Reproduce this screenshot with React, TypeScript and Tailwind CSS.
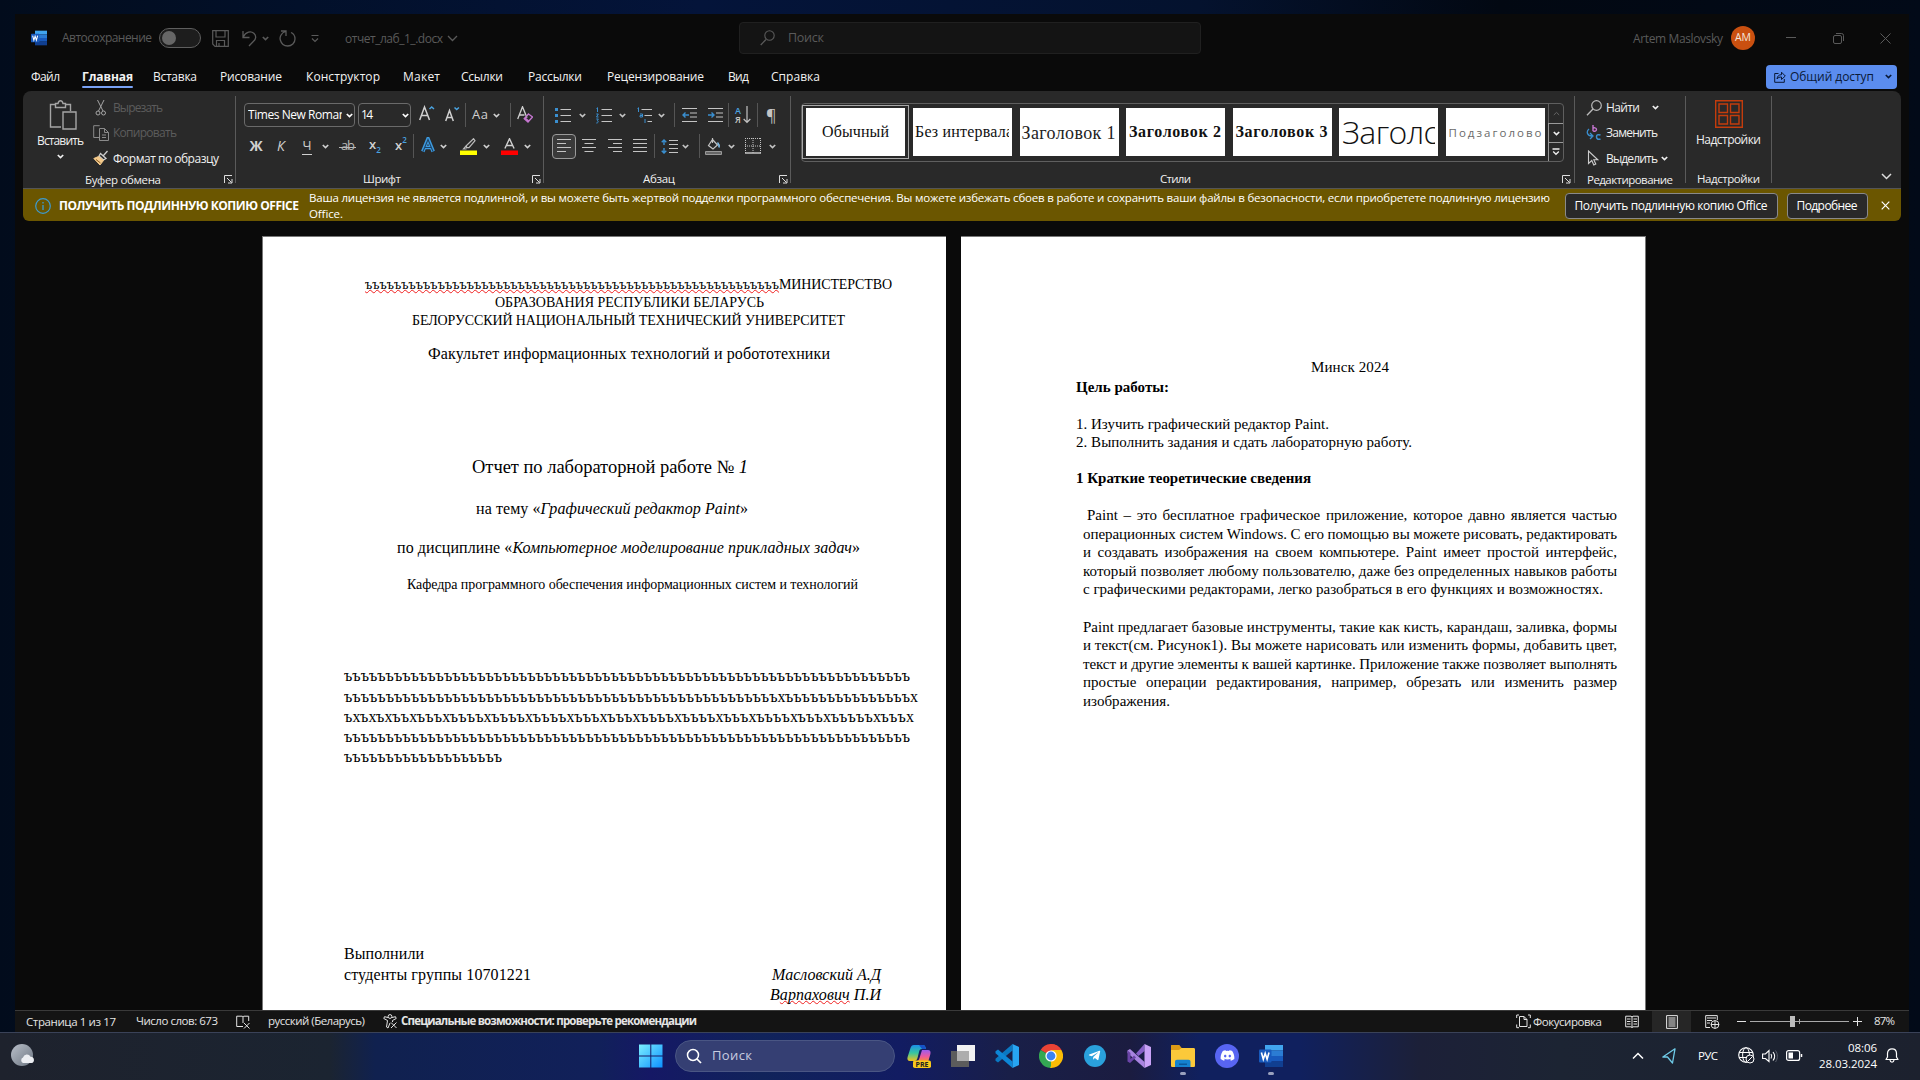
import React, { useLayoutEffect, useRef, useState } from 'react';
import { FaDiscord, FaTelegramPlane } from 'react-icons/fa';

/* One line of text whose tracking is adjusted so that it spans `w` pixels. */
function Fit({ w, className = '', children }: { w: number; className?: string; children: React.ReactNode }) {
  const ref = useRef<HTMLSpanElement>(null);
  const [spacing, setSpacing] = useState(0);
  useLayoutEffect(() => {
    const el = ref.current;
    if (!el) return;
    const n = (el.textContent || '').length;
    if (n > 1) setSpacing((w - el.getBoundingClientRect().width) / (n - 1));
  }, [w]);
  return (
    <span className={`block shrink-0 whitespace-nowrap ${className}`} style={{ width: w }}>
      <span ref={ref} className="inline-block" style={{ letterSpacing: spacing }}>{children}</span>
    </span>
  );
}

function Svg({ w, h, className = '', children }: { w: number; h: number; className?: string; children: React.ReactNode }) {
  return (
    <svg width={w} height={h} viewBox={`0 0 ${w} ${h}`} fill="none" stroke="currentColor" className={`shrink-0 ${className}`}>
      {children}
    </svg>
  );
}

const Chev = ({ className = '' }: { className?: string }) => (
  <Svg w={7} h={5} className={className}><path d="M.8 1l2.700 2.500L6.200 1" strokeWidth="1.700" /></Svg>
);
const Sep = ({ className = '' }: { className?: string }) => <div className={`h-[24px] w-px shrink-0 bg-[#555] ${className}`} />;
const Divider = () => <div className="my-[5px] w-px shrink-0 bg-[#5a5a5a]" />;
const Launcher = ({ className = '' }: { className?: string }) => (
  <Svg w={9} h={9} className={`text-[#ddd] ${className}`}><path d="M.5 8V.5H8M3 3l4.500 4.500M8 4v4H4" /></Svg>
);

function Group({ className, label, children }: { className: string; label: React.ReactNode; children: React.ReactNode }) {
  return (
    <div className={`flex shrink-0 flex-col ${className}`}>
      <div className="h-[80px]">{children}</div>
      <div className="flex h-[18px] items-center text-[11.5px] font-medium text-[#f0f0f0]">{label}</div>
    </div>
  );
}

function WordLogo({ size }: { size: number }) {
  return (
    <svg width={size} height={size} viewBox="0 0 24 24" className="shrink-0">
      <path d="M6 1h18v5.500H6z" fill="#41a5ee" /><path d="M6 6.500h18V12H6z" fill="#2b7cd3" />
      <path d="M6 12h18v5.500H6z" fill="#185abd" /><path d="M6 17.500h18V23H6z" fill="#103f91" />
      <rect x="0" y="5.500" width="12.500" height="13" rx="1" fill="#185abd" />
      <path d="M2.400 8.500l1.900 6.800 1.900-6 1.900 6L10 8.500" fill="none" stroke="#fff" strokeWidth="1.600" />
    </svg>
  );
}

function TitleBar() {
  return (
    <div className="flex h-[48px] items-center text-[12px] text-[#5a5a5a]">
      <div className="ml-[16px]"><WordLogo size={16} /></div>
      <Fit w={90} className="ml-[15px]">Автосохранение</Fit>
      <div className="ml-[7px] h-[20px] w-[42px] shrink-0 rounded-full border border-[#5f5f5f] bg-[#1d1d1d] p-[2px]">
        <div className="h-[14px] w-[14px] rounded-full bg-[#666]" />
      </div>
      <Svg w={17} h={17} className="ml-[11px]"><path d="M.7.700h15.600v15.600H3L.7 14zM4 1v6h9V1M4.500 16v-5.500h8V16M7 13v3" strokeWidth="1.200" /></Svg>
      <Svg w={15} h={17} className="ml-[13px]"><path d="M1 1v6.500h6.500M1.200 7C4 1.500 9 .8 11.800 3.300c3 2.700 2 6-.3 8L7 16" strokeWidth="1.300" /></Svg>
      <Chev className="ml-[5px]" />
      <Svg w={17} h={17} className="ml-[10px]"><path d="M2 1h5v5M6.500 1.500C2 3 .5 7 1.300 10c1 3.500 4 6 7.400 6 4 0 7.300-3 7.300-7 0-3-1.500-5.500-4-6.500" strokeWidth="1.300" /></Svg>
      <Svg w={8} h={9} className="ml-[15px]"><path d="M.5 1.500h7M1 4.500l3 3 3-3" strokeWidth="1.200" /></Svg>
      <Fit w={98} className="ml-[26px] pt-px">отчет_лаб_1_.docx</Fit>
      <Svg w={11} h={7} className="ml-[4px]"><path d="M1 1l4.500 4.500L10 1" strokeWidth="1.300" /></Svg>
      <div className="ml-[281px] flex h-[32px] w-[462px] shrink-0 items-center rounded-[4px] border border-[#202020] bg-[#141414]">
        <Svg w={15} h={16} className="ml-[20px]"><circle cx="9.500" cy="5.500" r="4.700" strokeWidth="1.100" /><path d="M6 9.500L.7 15" strokeWidth="1.300" /></Svg>
        <Fit w={36} className="ml-[13px] pt-px text-[12.5px]">Поиск</Fit>
      </div>
      <Fit w={90} className="ml-[432px] pt-px">Artem Maslovsky</Fit>
      <div className="ml-[8px] flex h-[24px] w-[24px] shrink-0 items-center justify-center rounded-full bg-[#ca5010] text-[10.5px] text-[#f4e6dc]">AM</div>
      <Svg w={10} h={2} className="ml-[31px]"><path d="M0 .500h10" /></Svg>
      <Svg w={11} h={11} className="ml-[37px]"><rect x=".5" y="2.500" width="8" height="8" rx="1.500" /><path d="M3 .5h5.500a2 2 0 0 1 2 2V8" /></Svg>
      <Svg w={11} h={11} className="ml-[36px]"><path d="M.5.500l10 10M10.500.500l-10 10" /></Svg>
    </div>
  );
}

function Tabs() {
  return (
    <div className="flex h-[29px] items-center text-[12px] text-[#f2f2f2]">
      <Fit w={29} className="ml-[16px]">Файл</Fit>
      <div className="relative ml-[22px]">
        <Fit w={51} className="font-bold">Главная</Fit>
        <div className="absolute -bottom-[2px] left-0 h-[2px] w-full rounded bg-[#7aa2f5]" />
      </div>
      <Fit w={44} className="ml-[20px]">Вставка</Fit>
      <Fit w={62} className="ml-[23px]">Рисование</Fit>
      <Fit w={74} className="ml-[24px]">Конструктор</Fit>
      <Fit w={37} className="ml-[23px]">Макет</Fit>
      <Fit w={42} className="ml-[21px]">Ссылки</Fit>
      <Fit w={54} className="ml-[25px]">Рассылки</Fit>
      <Fit w={97} className="ml-[25px]">Рецензирование</Fit>
      <Fit w={21} className="ml-[24px]">Вид</Fit>
      <Fit w={49} className="ml-[22px]">Справка</Fit>
      <div className="mr-[12px] ml-auto flex h-[24px] w-[131px] items-center rounded-[4px] bg-[#5b8def] text-[#0a1a38]">
        <Svg w={12} h={12} className="ml-[8px]"><path d="M4.500 2.500H.7v8.800h9.600V8M3 8c.3-3 2-4.300 4.500-4.300V1.200L11.300 5 7.500 8.500V6C5.500 6 4 6.500 3 8z" /></Svg>
        <Fit w={84} className="ml-[4px]">Общий доступ</Fit>
        <Chev className="ml-[11px]" />
      </div>
    </div>
  );
}

function ClipboardGroup() {
  return (
    <Group className="w-[212px]" label={<><Fit w={76} className="ml-[62px]">Буфер обмена</Fit><Launcher className="mr-[2px] ml-auto" /></>}>
      <div className="flex h-full">
        <div className="ml-[5px] flex w-[65px] shrink-0 flex-col items-center text-[12px] text-[#f0f0f0]">
          <Svg w={28} h={30} className="mt-[9px] ml-[4px] text-[#a5a5a5]">
            <path d="M6 4.500H1.500V27H12M17 4.500h4.500V11M6.500 7.500v-4H9C9.500 1.500 10.500.7 11.500.7s2 .8 2.500 2.800h2.500v4z" strokeWidth="1.400" />
            <path d="M14 12h13v17H14z" strokeWidth="1.400" />
          </Svg>
          <Fit w={47} className="mt-[1px] leading-[20px]">Вставить</Fit>
          <Chev className="mt-[3px]" />
        </div>
        <div className="pt-[4px] text-[12px] text-[#5c5c5c]">
          <div className="flex h-[25px] items-center">
            <Svg w={16} h={16} className="text-[#a5a5a5]"><path d="M4.500 0l5.500 11M11 0L5.500 11" /><circle cx="5" cy="13" r="2" /><circle cx="10.500" cy="13" r="2" /></Svg>
            <Fit w={50} className="ml-[4px]">Вырезать</Fit>
          </div>
          <div className="flex h-[25px] items-center">
            <Svg w={16} h={16} className="text-[#8a8a8a]"><path d="M6 12.500H.7V.700h6M6.500 3.500h5l4 4v8h-9zM11.500 3.500v4h4M9 10h4M9 12.500h4" /></Svg>
            <Fit w={64} className="ml-[4px] pt-px">Копировать</Fit>
          </div>
          <div className="flex h-[26px] items-center text-[#f0f0f0]">
            <Svg w={16} h={16}>
              <path d="M14.500 1l-4 4.500M7.500 3.500l5.500 5-2.500 1.500L6 6z" stroke="#ccc" strokeWidth="1.300" />
              <path d="M5.500 6.500L.8 8.500 7 15l3.500-4.500z" fill="#f3c98b" stroke="#f3c98b" /><path d="M3 9.500L7.500 13" stroke="#8a5a20" />
            </Svg>
            <Fit w={106} className="ml-[4px] pt-px">Формат по образцу</Fit>
          </div>
        </div>
      </div>
    </Group>
  );
}

function FontGroup() {
  return (
    <Group className="w-[307px]" label={<><Fit w={38} className="ml-[127px]">Шрифт</Fit><Launcher className="mr-[2px] ml-auto" /></>}>
      <div className="flex flex-col gap-[7px] pt-[12px] text-[#d0d0d0]">
        <div className="flex h-[24px] items-center">
          <div className="ml-[8px] flex h-[24px] w-[111px] shrink-0 items-center rounded-[4px] border border-[#6a6a6a] text-[12px] text-white">
            <div className="ml-[3px] w-[94px] overflow-hidden"><Fit w={98}>Times New Roman</Fit></div>
            <Chev className="ml-[4px]" />
          </div>
          <div className="ml-[3px] flex h-[24px] w-[53px] shrink-0 items-center rounded-[4px] border border-[#6a6a6a] text-[12px] text-white">
            <Fit w={12} className="ml-[2px]">14</Fit>
            <Chev className="ml-[29px]" />
          </div>
          <Svg w={16} h={16} className="ml-[8px] -mt-[4px]"><path d="M.7 15L5.500 2l5 13M2.500 10.500h6.500" strokeWidth="1.500" /><path d="M10.500 4l2.200-2L15 4" stroke="#4aa3e0" strokeWidth="1.500" /></Svg>
          <Svg w={15} h={16} className="ml-[10px] mr-px -mt-[3px]"><path d="M.7 15L4.500 4.500 8.300 15M2.300 11.500h4.500" strokeWidth="1.500" /><path d="M9.500 1.500L11.700 3.500 13.900 1.500" stroke="#4aa3e0" strokeWidth="1.500" /></Svg>
          <Sep className="ml-[4px]" />
          <Fit w={16} className="ml-[6px] text-[13px]">Aa</Fit>
          <Chev className="ml-[5px]" />
          <Sep className="ml-[10px]" />
          <Svg w={16} h={17} className="ml-[6px] -mt-[2px]"><path d="M.7 13L5.500.7l4.500 11M2.500 9h5" strokeWidth="1.300" /><path d="M11.500 8l4 3-4.500 5-3.800-3.200z" stroke="#c576d0" strokeWidth="1.300" /><path d="M8.500 11.500l3.700 3-1.200 1.300-3.700-3z" fill="#c576d0" stroke="none" /></Svg>
        </div>
        <div className="flex h-[24px] items-center">
          <div className="ml-[13px] w-[14px] text-center text-[14px] leading-[20px] font-bold">Ж</div>
          <div className="ml-[14px] w-[9px] text-[14px] leading-[20px] italic">К</div>
          <div className="ml-[16px] flex h-[17px] w-[10px] justify-center border-b border-[#d0d0d0] text-[13px] leading-[15px]">Ч</div>
          <Chev className="ml-[10px]" />
          <div className="relative ml-[11px] text-[#b8b8b8]">
            <Fit w={14} className="px-px text-[13px]">ab</Fit>
            <div className="absolute top-[11px] -left-px h-px w-[17px] bg-[#b8b8b8]" />
          </div>
          <div className="ml-[15px] flex w-[13px] text-[13px] font-semibold">x<span className="mt-[8px] text-[8px] leading-[14px] text-[#4aa3e0]">2</span></div>
          <div className="ml-[13px] flex w-[13px] text-[13px] font-semibold">x<span className="text-[8px] leading-[8px] text-[#4aa3e0]">2</span></div>
          <Sep className="ml-[5px]" />
          <Svg w={14} h={16} className="ml-[7px] -mt-[2px]"><path d="M1.800 14.500L7 1.800l5.200 12.700M4 10.500h6" stroke="#3d9be0" strokeWidth="3.600" /><path d="M2 14.500L7 2.500l5 12M4 10.500h6" stroke="#1d4468" strokeWidth="1.100" /></Svg>
          <Chev className="ml-[5px]" />
          <Svg w={17} h={17} className="ml-[13px]"><path d="M13.500.7l1.500 2-6 7H6.500V7.500zM6.500 7.500L3.500 11h3" stroke="#bbb" strokeWidth="1.200" /><path d="M0 12.500h17v4.500H0z" fill="#ffff00" stroke="none" /></Svg>
          <Chev className="ml-[6px]" />
          <Svg w={17} h={17} className="ml-[11px]"><path d="M3.900 10.500L8.500.7l4.600 9.800M5.500 7.500h6" strokeWidth="1.400" /><path d="M0 12.500h17v4.500H0z" fill="#ff0000" stroke="none" /></Svg>
          <Chev className="ml-[6px]" />
        </div>
      </div>
    </Group>
  );
}

function ParagraphGroup() {
  return (
    <Group className="w-[246px]" label={<><Fit w={32} className="ml-[99px]">Абзац</Fit><Launcher className="mr-[2px] ml-auto" /></>}>
      <div className="flex flex-col gap-[7px] pt-[12px] text-[#c4c4c4]">
        <div className="flex h-[24px] items-center">
          <Svg w={16} h={16} className="ml-[11px]"><path d="M5.500 2.500H16M5.500 8.500H16M5.500 14.500H16" /><path d="M0 1h3v3H0zM0 7h3v3H0zM0 13h3v3H0z" fill="#3a8fd0" stroke="none" /></Svg>
          <Chev className="ml-[8px]" />
          <Svg w={16} h={17} className="ml-[10px]"><path d="M5.500 2.500H16M5.500 8.500H16M5.500 14.500H16" /><path d="M.5 1.500l1-.8V5M.3 7h2L.5 10h2M.3 12h2L1.300 13.700c1.500 0 1.200 2.500-1 2.300" stroke="#3a8fd0" /></Svg>
          <Chev className="ml-[7px]" />
          <Svg w={16} h={17} className="ml-[11px]"><path d="M4.500 2.500H15M7.500 8.500H15M10.500 14.500H15" /><path d="M.5 1.500l1-.8V5M3 7h2.500v3H3V8.500h2.500M8 12v4" stroke="#3a8fd0" /></Svg>
          <Chev className="ml-[5px]" />
          <Sep className="ml-[9px]" />
          <Svg w={15} h={14} className="ml-[7px]"><path d="M0 .5h15M8 5h7M8 9h7M0 13.500h15" /><path d="M7 7H1M3.500 4.500L1 7l2.500 2.500" stroke="#3a8fd0" strokeWidth="1.400" /></Svg>
          <Svg w={15} h={14} className="ml-[11px]"><path d="M0 .5h15M8 5h7M8 9h7M0 13.500h15" /><path d="M0 7h6M3.500 4.500L6 7 3.500 9.500" stroke="#3a8fd0" strokeWidth="1.400" /></Svg>
          <Sep className="ml-[5px]" />
          <div className="ml-[6px] flex w-[17px] shrink-0">
            <div className="flex w-[8px] flex-col text-[9px] leading-[9px] font-semibold"><div className="text-[#4aa3e0]">А</div><div>Я</div></div>
            <Svg w={8} h={18}><path d="M4 0v16.500M.7 13L4 16.500 7.300 13" strokeWidth="1.200" /></Svg>
          </div>
          <Sep className="ml-[5px]" />
          <div className="ml-[8px] w-[12px] text-[16px] leading-[20px]">¶</div>
        </div>
        <div className="flex h-[24px] items-center">
          <div className="ml-[8px] flex h-[25px] w-[24px] shrink-0 items-center justify-center rounded-[4px] border border-[#9a9a9a] bg-[#3a3a3a]">
            <Svg w={14} h={14}><path d="M0 .5h14M0 4.500h9M0 8.500h14M0 12.500h9" /></Svg>
          </div>
          <Svg w={14} h={14} className="ml-[6px]"><path d="M0 .5h14M2.500 4.500h9M0 8.500h14M2.500 12.500h9" /></Svg>
          <Svg w={14} h={14} className="ml-[12px]"><path d="M0 .5h14M5 4.500h9M0 8.500h14M5 12.500h9" /></Svg>
          <Svg w={14} h={14} className="ml-[11px]"><path d="M0 .5h14M0 4.500h14M0 8.500h14M0 12.500h14" /></Svg>
          <Sep className="ml-[7px]" />
          <Svg w={17} h={15} className="ml-[6px]"><path d="M8 1.500h9M8 5.500h9M8 9.500h9M8 13.500h9" /><path d="M3 1v5M.7 3.200L3 1l2.300 2.200M3 14V9M.7 11.800L3 14l2.300-2.200" stroke="#3a8fd0" strokeWidth="1.400" /></Svg>
          <Chev className="ml-[4px]" />
          <Sep className="ml-[10px]" />
          <Svg w={17} h={17} className="ml-[5px]"><path d="M7.500 1.500L12.500 7 8 11 3.500 7.500zM7.500 0v5" strokeWidth="1.200" /><path d="M12.500 4.500c1.500 1.500 2 3 1.500 5" stroke="#7fc0ee" strokeWidth="1.500" /><path d="M.5 13.500h16v3H.5z" fill="#666" stroke="#999" /></Svg>
          <Chev className="ml-[6px]" />
          <Svg w={16} h={16} className="ml-[10px]"><path d="M.5 0v15M8 0v15M15.500 0v15M0 .5h16M0 8h16" strokeDasharray="1 1" /><path d="M0 15h16" strokeWidth="1.500" /></Svg>
          <Chev className="ml-[8px]" />
        </div>
      </div>
    </Group>
  );
}

const tile = 'flex h-[48px] w-[99px] shrink-0 items-center overflow-hidden bg-white text-[#111]';
const serif = "font-['Liberation_Serif','Times_New_Roman',serif]";

function StylesGroup() {
  return (
    <Group className="w-[783px]" label={<><Fit w={31} className="ml-[369px]">Стили</Fit><Launcher className="mr-[3px] ml-auto" /></>}>
      <div className="pt-[12px] pl-[10px]">
        <div className={`flex h-[59px] w-[763px] rounded-[4px] border border-[#5f5f5f] ${serif}`}>
          <div className="mt-[1px] flex h-[54px] w-[107px] shrink-0 items-center justify-center border border-[#a8a8a8]">
            <div className={tile}><Fit w={67} className="ml-[16px] text-[16px]">Обычный</Fit></div>
          </div>
          <div className="ml-[4px] flex gap-[7.5px] pt-[4px]">
            <div className={tile}><div className="ml-[2px] w-[94px] overflow-hidden"><Fit w={98} className="text-[16px]">Без интервала</Fit></div></div>
            <div className={tile}><Fit w={94} className="ml-[2px] pt-[3px] text-[18px] text-[#222]">Заголовок 1</Fit></div>
            <div className={tile}><Fit w={92} className="ml-[3px] text-[16px] font-bold">Заголовок 2</Fit></div>
            <div className={tile}><Fit w={92} className="ml-[3px] text-[16px] font-bold">Заголовок 3</Fit></div>
            <div className={tile}><div className="ml-[3px] w-[93px] overflow-hidden font-['Open_Sans',sans-serif] text-[32px] leading-[44px] font-light"><Fit w={150}>Заголовок</Fit></div></div>
            <div className={tile}><div className="ml-[3px] w-[93px] overflow-hidden pt-px font-['Open_Sans',sans-serif] text-[11.5px] text-[#6a6a6a]"><Fit w={101}>Подзаголовок</Fit></div></div>
          </div>
          <div className="ml-auto flex w-[15px] flex-col text-[#eee]">
            <div className="flex h-[19px] items-center justify-center border-l border-[#5f5f5f] text-[#666]"><Svg w={7} h={5}><path d="M.8 4l2.700-2.600L6.200 4" /></Svg></div>
            <div className="flex h-[20px] items-center justify-center border border-r-0 border-[#999]"><Chev /></div>
            <div className="flex h-[18px] items-center justify-center border-l border-[#999]"><Svg w={8} h={8}><path d="M.5 1h7M1.200 3.500L4 6.300l2.800-2.800" strokeWidth="1.300" /></Svg></div>
          </div>
        </div>
      </div>
    </Group>
  );
}

function Ribbon() {
  return (
    <div className="ml-[8px] flex h-[98px] w-[1878px] rounded-t-[8px] border-b border-[#555] bg-[#292929]">
      <ClipboardGroup />
      <Divider />
      <FontGroup />
      <Divider />
      <ParagraphGroup />
      <Divider />
      <StylesGroup />
      <Divider />
      <Group className="w-[110px]" label={<Fit w={86} className="ml-[12px]">Редактирование</Fit>}>
        <div className="pt-[4px] pl-[11px] text-[12px] text-[#f0f0f0]">
          <div className="flex h-[25px] items-center">
            <Svg w={16} h={16} className="text-[#bbb]"><circle cx="10.500" cy="5.500" r="4.800" strokeWidth="1.200" /><path d="M7 9L1 15.300" strokeWidth="1.300" /></Svg>
            <Fit w={34} className="ml-[4px]">Найти</Fit>
            <Chev className="ml-[12px]" />
          </div>
          <div className="flex h-[25px] items-center">
            <Svg w={16} h={16}><path d="M7 0v6M7 3.500c.5-1 3.500-1 3.500 1S7.500 6.800 7 5.500" stroke="#c576d0" strokeWidth="1.400" /><path d="M14.500 10c-3-1-4 .3-4 2s1.500 3 4 2" stroke="#3a8fd0" strokeWidth="1.500" /><path d="M3 4c-3 2.500-2 7 3 7M4 8l3 3-3 3" stroke="#3a8fd0" strokeWidth="1.300" /></Svg>
            <Fit w={52} className="ml-[4px] pt-px">Заменить</Fit>
          </div>
          <div className="flex h-[26px] items-center">
            <Svg w={16} h={16} className="text-[#ccc]"><path d="M2.500 1v12.500L5.800 10.500 7.800 15l2-1L7.800 9.800h4z" strokeWidth="1.100" /></Svg>
            <Fit w={52} className="ml-[4px] pt-px">Выделить</Fit>
            <Chev className="ml-[3px]" />
          </div>
        </div>
      </Group>
      <Divider />
      <Group className="w-[85px]" label={<Fit w={63} className="ml-[11px]">Надстройки</Fit>}>
        <div className="flex flex-col items-center pt-[9px] text-[12px] text-[#f0f0f0]">
          <Svg w={28} h={28} className="text-[#c43c0c]"><path d="M.7.700h26.600v26.600H.7zM4 4h8.500v8.500H4zM15.500 4H24v8.500h-8.500zM4 15.500h8.500V24H4zM15.500 15.500H24V24h-8.500z" strokeWidth="1.400" /></Svg>
          <Fit w={65} className="mt-[2px] leading-[20px]">Надстройки</Fit>
        </div>
      </Group>
      <Divider />
      <Svg w={11} h={7} className="mt-[82px] mr-[9px] ml-auto text-[#ddd]"><path d="M1 1l4.500 4.500L10 1" strokeWidth="1.500" /></Svg>
    </div>
  );
}

function LicenseBanner() {
  return (
    <div className="ml-[8px] flex h-[32px] w-[1878px] items-center rounded-b-[6px] bg-[#6b5600] pt-px text-[11.5px] text-white">
      <Svg w={16} h={16} className="ml-[12px] text-[#3d9bd0]"><circle cx="8" cy="8" r="7.300" strokeWidth="1.200" /><path d="M8 7v5M8 4v1.500" strokeWidth="1.300" /></Svg>
      <Fit w={240} className="ml-[8px] text-[12px] font-bold">ПОЛУЧИТЬ ПОДЛИННУЮ КОПИЮ OFFICE</Fit>
      <div className="ml-[10px] leading-[15.500px] font-medium">
        <Fit w={1241}>Ваша лицензия не является подлинной, и вы можете быть жертвой подделки программного обеспечения. Вы можете избежать сбоев в работе и сохранить ваши файлы в безопасности, если приобретете подлинную лицензию</Fit>
        <Fit w={34}>Office.</Fit>
      </div>
      <div className="ml-[15px] flex h-[26px] w-[213px] shrink-0 items-center justify-center rounded-[4px] border border-[#8a8a8a] bg-[#292929] pr-px text-[12px]"><Fit w={193}>Получить подлинную копию Office</Fit></div>
      <div className="ml-[9px] flex h-[26px] w-[81px] shrink-0 items-center justify-center rounded-[4px] border border-[#8a8a8a] bg-[#292929] pr-px text-[12px]"><Fit w={61}>Подробнее</Fit></div>
      <Svg w={9} h={9} className="ml-[13px]"><path d="M.7.700l7.600 7.600M8.300.700L.7 8.300" strokeWidth="1.200" /></Svg>
    </div>
  );
}

const hard = (n: number) => 'ъ'.repeat(n);
const squiggle =
  'underline decoration-[#f02020] decoration-wavy decoration-[1.2px] underline-offset-0 [text-decoration-skip-ink:none]';

function PageOne() {
  return (
    <div className={`ml-[247px] h-[774px] w-[684px] shrink-0 overflow-hidden border-t border-l border-[#777] bg-white text-black ${serif}`}>
      <div className="pt-[39px] text-[14px] leading-[18px]">
        <div className="ml-[102px] flex">
          <Fit w={414}><span className={squiggle}>{hard(57)}</span></Fit>
          <Fit w={113}>МИНИСТЕРСТВО</Fit>
        </div>
        <Fit w={269} className="ml-[232px]">ОБРАЗОВАНИЯ РЕСПУБЛИКИ БЕЛАРУСЬ</Fit>
        <Fit w={433} className="ml-[149px]">БЕЛОРУССКИЙ НАЦИОНАЛЬНЫЙ ТЕХНИЧЕСКИЙ УНИВЕРСИТЕТ</Fit>
      </div>
      <div className="mt-[14.500px] text-[16px] leading-[18px]">
        <Fit w={402} className="ml-[165px]">Факультет информационных технологий и робототехники</Fit>
        <Fit w={276} className="mt-[94.500px] ml-[209px] text-[18.500px] leading-[20px]">Отчет по лабораторной работе № <i>1</i></Fit>
        <Fit w={272} className="mt-[23px] ml-[213px]">на тему «<i>Графический редактор Paint</i>»</Fit>
        <Fit w={463} className="mt-[21px] ml-[134px]">по дисциплине «<i>Компьютерное моделирование прикладных задач</i>»</Fit>
        <Fit w={451} className="mt-[19px] ml-[144px] text-[14px]">Кафедра программного обеспечения информационных систем и технологий</Fit>
      </div>
      <div className="mt-[72px] ml-[81px] text-[16px] leading-[20px]">
        <Fit w={566}>{hard(68)}</Fit>
        <Fit w={574} className="mt-[0.500px]">{`${hard(52)}х${hard(15)}х`}</Fit>
        <Fit w={570}>ъхъхъхъъхъъъхъъъъхъъъъхъъъъхъъъхъъъхъъъъхъъъъхъъъхъъъъхъъъхъъъъъхъъъх</Fit>
        <Fit w={566}>{hard(68)}</Fit>
        <Fit w={158}>{hard(19)}</Fit>
      </div>
      <div className="mt-[177.500px] ml-[81px] flex w-[537px] justify-between text-[16px] leading-[20.500px]">
        <div>
          <Fit w={80}>Выполнили</Fit>
          <Fit w={187}>студенты группы 10701221</Fit>
        </div>
        <div className="flex flex-col items-end pt-[20.500px] italic">
          <Fit w={109}>Масловский А.Д</Fit>
          <Fit w={111} className="-mt-[0.500px]">В<span className={squiggle}>арпахович</span> П.И</Fit>
        </div>
      </div>
    </div>
  );
}

const just = 'block text-justify whitespace-nowrap [text-align-last:justify]';

function PageTwo() {
  return (
    <div className={`ml-[15px] h-[774px] w-[685px] shrink-0 overflow-hidden border-t border-r border-[#777] bg-white text-[15px] leading-[18.500px] text-black ${serif}`}>
      <Fit w={78} className="mt-[121px] ml-[350px]">Минск 2024</Fit>
      <div className="ml-[115px]">
        <Fit w={93} className="mt-[1px] font-bold">Цель работы:</Fit>
        <Fit w={253} className="mt-[19px]">1. Изучить графический редактор Paint.</Fit>
        <Fit w={336} className="-mt-px">2. Выполнить задания и сдать лабораторную работу.</Fit>
        <Fit w={235} className="mt-[17.500px] font-bold">1 Краткие теоретические сведения</Fit>
      </div>
      <div className="mt-[19px] ml-[122px] w-[534px]">
        <span className={`${just} pl-[4px]`}>Paint – это бесплатное графическое приложение, которое давно является частью</span>
        <Fit w={534}>операционных систем Windows. С его помощью вы можете рисовать, редактировать</Fit>
        <span className={just}>и создавать изображения на своем компьютере. Paint имеет простой интерфейс,</span>
        <Fit w={534}>который позволяет любому пользователю, даже без определенных навыков работы</Fit>
        <Fit w={520}>с графическими редакторами, легко разобраться в его функциях и возможностях.</Fit>
      </div>
      <div className="mt-[19px] ml-[122px] w-[534px]">
        <Fit w={534}>Paint предлагает базовые инструменты, такие как кисть, карандаш, заливка, формы</Fit>
        <Fit w={534}>и текст(см. Рисунок1). Вы можете нарисовать или изменить формы, добавить цвет,</Fit>
        <Fit w={534}>текст и другие элементы к вашей картинке. Приложение также позволяет выполнять</Fit>
        <span className={just}>простые операции редактирования, например, обрезать или изменить размер</span>
        <Fit w={87}>изображения.</Fit>
      </div>
    </div>
  );
}

function StatusBar() {
  return (
    <div className="flex h-[22px] items-center border-t border-[#3a3a3a] bg-[#141414] text-[11.5px] text-[#e4e4e4]">
      <Fit w={90} className="ml-[11px]">Страница 1 из 17</Fit>
      <Fit w={82} className="ml-[20px] pb-px">Число слов: 673</Fit>
      <Svg w={14} h={14} className="ml-[18px]"><path d="M7 11.500H.7V1.200h5.600L7 2l.7-.8h5V6M7 2v6M8 8l5.500 5.500M13.500 8L8 13.500" /></Svg>
      <Fit w={97} className="ml-[18px] pb-px">русский (Беларусь)</Fit>
      <Svg w={15} h={15} className="ml-[18px]"><circle cx="7" cy="2.500" r="1.900" /><path d="M5 3.500L1.500 2.700.8 4.500l3.700 2L3.500 13l1.500 1L7 9M9 3.500l3.500-.8.700 1.800-3.700 2V8M8 8.500l5.500 5.500M13.500 8.500L8 14" /></Svg>
      <Fit w={296} className="ml-[3px] pb-px font-bold">Специальные возможности: проверьте рекомендации</Fit>
      <Svg w={15} h={15} className="ml-auto"><path d="M3 1H.7v3M.7 10.500v3.200H3M12 1h2.300v3M14.300 10.500v3.200H12M3.500 2.500h4.500l3 3v7h-7.500zM8 2.500v3h3" /></Svg>
      <Fit w={69} className="ml-[2px]">Фокусировка</Fit>
      <Svg w={14} h={14} className="ml-[23px]"><path d="M7 2L6 1.200H.7v10.600H6l1 .8 1-.8h5.300V1.200H8zM7 2v10.500M2 4h3.500M2 6.500h3.500M2 9h3.500M8.500 4H12M8.500 6.500H12M8.500 9H12" /></Svg>
      <div className="ml-[13px] flex h-[21px] w-[39px] items-center justify-center bg-[#262626]">
        <Svg w={12} h={14}><path d="M.6.600h10.800v12.800H.6zM2.500 3h7M2.500 5h7M2.500 7h7M2.500 9h7M2.500 11h7" /></Svg>
      </div>
      <Svg w={15} h={14} className="ml-[14px]"><path d="M5 12.500H.7V.600h11.600V5M2 3h9M2 5.500h5M2 8h3" /><circle cx="10" cy="9.500" r="3.900" fill="#141414" /><path d="M6 9.500h8M10 5.500v8" /></Svg>
      <Svg w={9} h={9} className="ml-[17px]"><path d="M0 4.500h9" /></Svg>
      <div className="ml-[4px] flex h-[12px] w-[99px] items-center">
        <div className="h-px w-[40px] bg-[#aaa]" /><div className="h-[11px] w-[5px] bg-[#bbb]" /><div className="h-px w-[4px] bg-[#aaa]" /><div className="h-[5px] w-px bg-[#aaa]" /><div className="h-px w-[49px] bg-[#aaa]" />
      </div>
      <Svg w={9} h={9} className="ml-[4px]"><path d="M0 4.500h9M4.500 0v9" /></Svg>
      <Fit w={21} className="mr-[14px] ml-[12px] pb-px">87%</Fit>
    </div>
  );
}

function Taskbar() {
  return (
    <div className="flex h-[48px] items-center border-t border-[#3a4258] bg-[linear-gradient(90deg,#1e222d_0,#1b2431_330px,#10214f_375px,#11205a_600px,#151865_650px,#10235a_760px,#121c62_900px,#191f48_1010px,#1b1c40_1130px,#10205e_1200px,#10205e_1300px,#1c2038_1420px,#1c2433_1560px,#1c212e_1920px)] pb-[2px] text-white">
      <Svg w={25} h={24} className="ml-[11px]">
        <circle cx="11" cy="11" r="11" fill="url(#moon)" stroke="none" />
        <path d="M12 19a3 3 0 0 1 0-5.500 4 4 0 0 1 7.500-.8 3.200 3.200 0 0 1 1 6.300z" fill="#eceef2" stroke="none" />
        <defs><linearGradient id="moon" x1="0" y1="0" x2="1" y2="1"><stop stopColor="#b9bfc9" /><stop offset="1" stopColor="#6d7682" /></linearGradient></defs>
      </Svg>
      <Svg w={24} h={24} className="ml-[603px]">
        <defs><linearGradient id="win" x1="0" y1="0" x2="24" y2="24" gradientUnits="userSpaceOnUse"><stop stopColor="#7df0ff" /><stop offset="1" stopColor="#0a8fff" /></linearGradient></defs>
        <path d="M0 .500h11.300v11H0zM12.300.500h11.200v11H12.300zM0 12.500h11.300v11H0zM12.300 12.500h11.200v11H12.300z" fill="url(#win)" stroke="none" />
      </Svg>
      <div className="ml-[12px] flex h-[32px] w-[220px] shrink-0 items-center rounded-full border border-[#4a5684] bg-[#353f73]">
        <Svg w={16} h={16} className="ml-[10px]"><circle cx="7" cy="7" r="5.500" strokeWidth="1.500" /><path d="M11 11l4 4" strokeWidth="1.700" /></Svg>
        <Fit w={40} className="ml-[10px] text-[13px] text-[#c8cde0]">Поиск</Fit>
      </div>
      <Svg w={24} h={24} className="ml-[12px]">
        <defs>
          <linearGradient id="cpA" x1="0" y1="0" x2="0" y2="1"><stop stopColor="#1b8fe8" /><stop offset=".5" stopColor="#36c6a0" /><stop offset="1" stopColor="#f2c21b" /></linearGradient>
          <linearGradient id="cpB" x1="0" y1="0" x2="0" y2="1"><stop stopColor="#9a5cf0" /><stop offset=".6" stopColor="#ee5a9c" /><stop offset="1" stopColor="#f58a3c" /></linearGradient>
        </defs>
        <path d="M7 1h9c2 0 2.500 2 3 4h-4c-2 0-2.500 1-3 3L10.500 14c-.5 2-1.500 3-3.500 3H3c-2.500 0-3-2-2.400-4L3.500 4C4.200 2 5 1 7 1z" fill="url(#cpA)" stroke="none" />
        <path d="M12 1h4c2 0 2.500 2 3 4h-4z" fill="#1652c9" stroke="none" />
        <path d="M15 6h6c2 0 3 1.500 2.400 4l-2 7H10c1.500 0 2-1.500 2.500-3z" fill="url(#cpB)" stroke="none" />
        <rect x="6" y="16.500" width="18" height="7.500" rx="1.800" fill="#f8c81c" stroke="none" />
        <text x="15" y="22.800" textAnchor="middle" fontSize="7" fontWeight="700" fill="#222" stroke="none" className="font-['Open_Sans',sans-serif]">PRE</text>
      </Svg>
      <Svg w={25} h={24} className="ml-[20px]"><path d="M6 1h18v16H6z" fill="#f2f2f2" stroke="none" /><path d="M0 7h18v16H0z" fill="#5c5c5c" stroke="none" /><path d="M6 7h12v10H6z" fill="#adadad" stroke="none" /></Svg>
      <Svg w={24} h={24} className="ml-[19px]">
        <path d="M17.500 0v6.500L3 18.500l-2.500-1.800v-2z" fill="#0a78c2" stroke="none" /><path d="M17.500 24v-6.500L3 5.500.500 7.300v2z" fill="#0d86d6" stroke="none" /><path d="M17.500 0L24 3v18l-6.500 3z" fill="#27a5f2" stroke="none" />
      </Svg>
      <Svg w={24} h={24} className="ml-[20px]">
        <path d="M12 12L1.600 6A12 12 0 0 1 22.400 6z" fill="#ea4335" stroke="none" /><path d="M12 12L22.400 6A12 12 0 0 1 12 24z" fill="#fbbc05" stroke="none" /><path d="M12 12v12A12 12 0 0 1 1.600 6z" fill="#34a853" stroke="none" />
        <path d="M12 6h10.400L17 15z" fill="#fbbc05" stroke="none" /><path d="M12 6h10.400A12 12 0 0 0 12 0z" fill="#ea4335" stroke="none" /><path d="M17.200 15L12 24l-1-.500z" fill="#fbbc05" stroke="none" />
        <circle cx="12" cy="12" r="5.600" fill="#fff" stroke="none" /><circle cx="12" cy="12" r="4.400" fill="#3b82f0" stroke="none" />
      </Svg>
      <div className="ml-[21px] flex h-[22px] w-[22px] shrink-0 items-center justify-center rounded-full bg-[#2aa1dc]"><FaTelegramPlane size={13} className="-translate-x-px" /></div>
      <Svg w={24} h={24} className="ml-[21px]">
        <path d="M.5 6.500L3 5l14.500 13v6L.5 9z" fill="#a884e0" stroke="none" /><path d="M.5 6.500v11L3 19l6-5.500-2-2-3.500 3.500V9z" fill="#6b45a8" stroke="none" /><path d="M17.500 0L9 9.500l2.500 2.500 6-5z" fill="#8660c8" stroke="none" /><path d="M17.500 0L24 3v18l-6.500 3z" fill="#c9a2f7" stroke="none" />
      </Svg>
      <div className="relative ml-[20px] h-[24px] w-[24px] shrink-0">
        <Svg w={24} h={24}><path d="M0 2.500C0 1.500.500 1 1.500 1H8l2.500 3H22.500c1 0 1.500.500 1.500 1.500v16c0 1-.5 1.500-1.500 1.500h-21C.5 23 0 22.500 0 21.500z" fill="#fcc93a" stroke="none" /><path d="M0 6V2.500C0 1.500.500 1 1.500 1H8l2.500 3-2.500 2z" fill="#dc9a16" stroke="none" /><path d="M4 23v-5c0-1.500.7-2.200 2-2.200h11.500c1.300 0 2 .7 2 2.200v5z" fill="#1583d0" stroke="none" /><path d="M8 19.500h8v1.500H8z" fill="#0b5a9c" stroke="none" /></Svg>
        <div className="absolute top-[28px] left-[9px] h-[3px] w-[6px] rounded-full bg-[#9aa1bd]" />
      </div>
      <div className="ml-[20px] flex h-[24px] w-[24px] shrink-0 items-center justify-center rounded-full bg-[#5865f2]"><FaDiscord size={15} /></div>
      <div className="relative ml-[20px] h-[24px] w-[24px] shrink-0">
        <WordLogo size={24} />
        <div className="absolute top-[28px] left-[9px] h-[3px] w-[6px] rounded-full bg-[#9aa1bd]" />
      </div>
      <Svg w={12} h={8} className="mr-[18px] ml-auto"><path d="M1 6.500l5-5 5 5" strokeWidth="1.500" /></Svg>
      <Svg w={14} h={16} className="text-[#6fcbe8]"><path d="M13 .8L.8 9h4.700l5 6z" strokeWidth="1.300" strokeLinejoin="round" /></Svg>
      <Fit w={20} className="ml-[22px] pt-px text-[11.5px]">РУС</Fit>
      <Svg w={17} h={17} className="ml-[20px]"><circle cx="8" cy="8" r="7.300" strokeWidth="1.100" /><ellipse cx="8" cy="8" rx="3.400" ry="7.300" /><path d="M1 5.500h14M1 10.500h8" /><circle cx="12" cy="12" r="4" fill="#1c212e" /><path d="M9.500 14.500l5-5" /></Svg>
      <Svg w={17} h={14} className="ml-[7px]"><path d="M.6 5v4.500h2.800L7 12.500V1.500L3.400 5z" strokeWidth="1.100" /><path d="M9 5c1 1.500 1 3 0 4.500M11 3c2 2.500 2 6 0 8.500" strokeWidth="1.100" /><path d="M13.500 1.500c2.500 3.500 2.500 8 0 11.500" stroke="#5a5f6b" /></Svg>
      <Svg w={17} h={11} className="ml-[7px]"><rect x=".6" y=".6" width="13" height="9.800" rx="2" strokeWidth="1.200" /><path d="M2.500 2.500h4.500v6H2.500z" fill="#fff" stroke="none" /><path d="M15.500 4v3" strokeWidth="1.500" /></Svg>
      <div className="ml-[16px] flex w-[58px] shrink-0 flex-col items-end text-[11.500px] leading-[16px]">
        <Fit w={29}>08:06</Fit>
        <Fit w={58}>28.03.2024</Fit>
      </div>
      <Svg w={14} h={16} className="mr-[21px] ml-[8px]"><path d="M1 11.500L2.500 9V5.500C2.500 2.500 4.500.800 7 .800s4.500 1.700 4.500 4.700V9l1.500 2.500zM5 12c.3 2.800 3.700 2.800 4 0" strokeWidth="1.200" strokeLinejoin="round" /></Svg>
    </div>
  );
}

export default function App() {
  return (
    <div className="flex h-[1080px] w-[1920px] flex-col overflow-hidden bg-[linear-gradient(90deg,#020c1c_0,#02102a_300px,#04143a_700px,#04122e_1200px,#020812_1500px,#020a18_1920px)] font-['Open_Sans','Noto_Sans',sans-serif]">
      <div className="mt-[14px] ml-[15px] flex h-[1018px] w-[1894px] shrink-0 flex-col bg-[#0a0a0a]">
        <TitleBar />
        <Tabs />
        <Ribbon />
        <LicenseBanner />
        <div className="flex h-[789px] shrink-0 pt-[15px]">
          <PageOne />
          <PageTwo />
        </div>
        <StatusBar />
      </div>
      <Taskbar />
    </div>
  );
}
